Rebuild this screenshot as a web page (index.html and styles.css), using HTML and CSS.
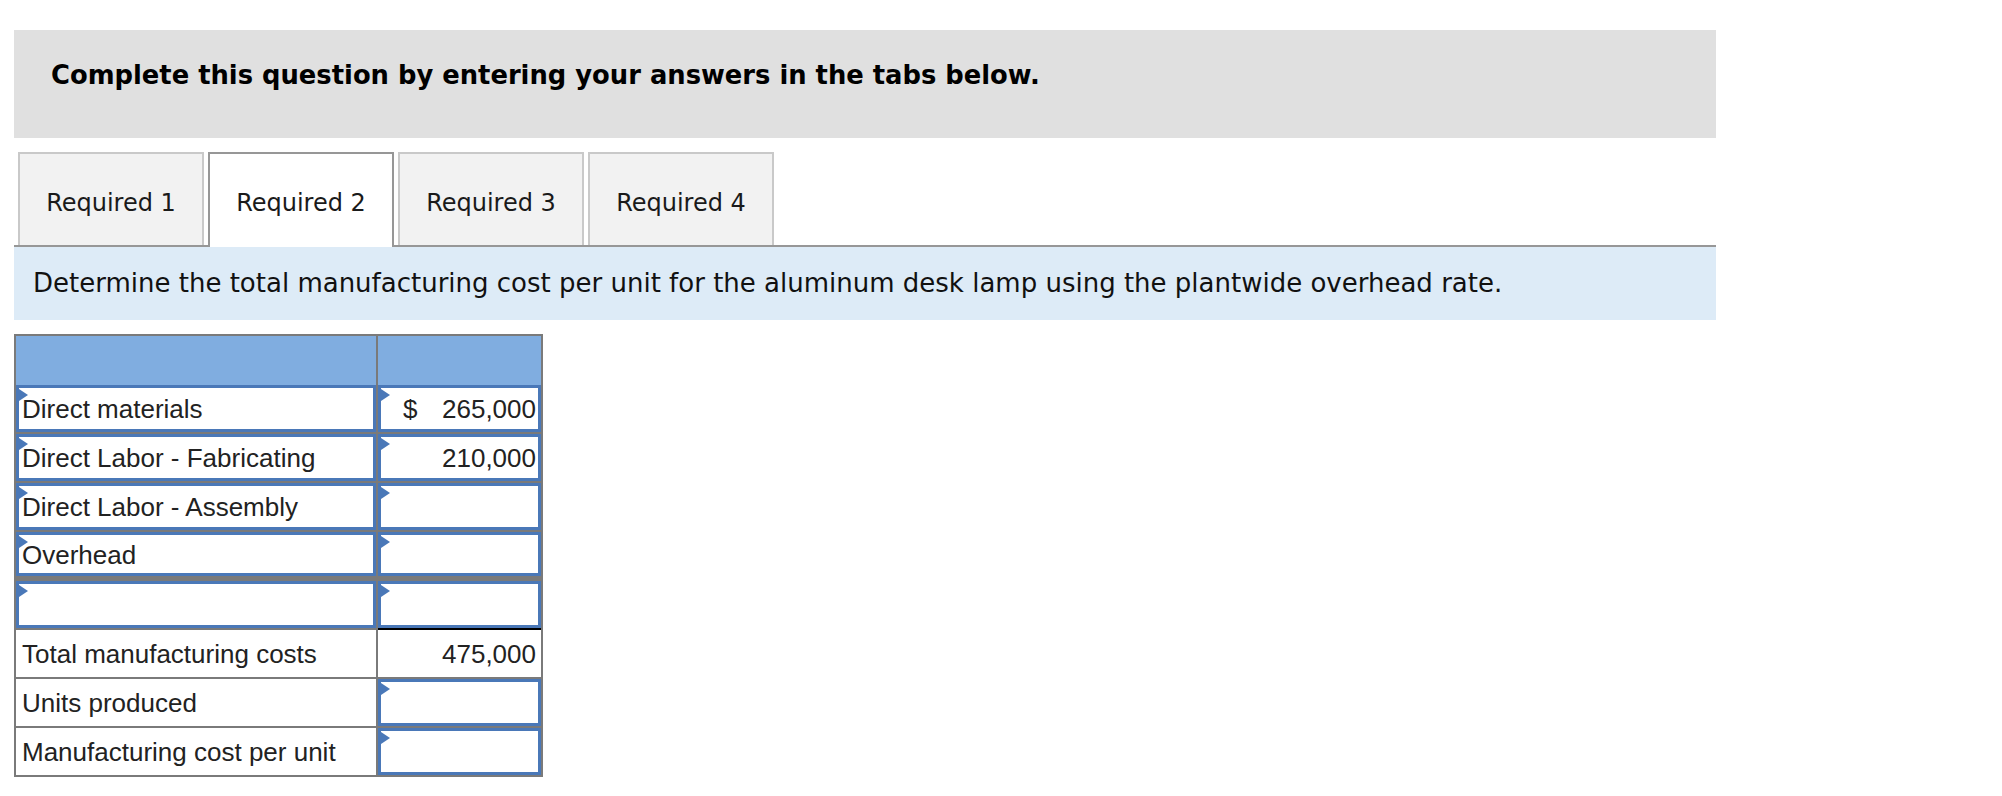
FILE: index.html
```html
<!DOCTYPE html>
<html lang="en">
<head>
<meta charset="utf-8">
<title>Required 2</title>
<link rel="stylesheet" href="styles.css">
</head>
<body>
<div class="page">
  <div class="prompt">Complete this question by entering your answers in the tabs below.</div>
  <div class="tabs">
    <div class="tab">Required 1</div>
    <div class="tab active">Required 2</div>
    <div class="tab">Required 3</div>
    <div class="tab">Required 4</div>
  </div>
  <div class="instr">Determine the total manufacturing cost per unit for the aluminum desk lamp using the plantwide overhead rate.</div>
  <div class="sheet">
    <div class="cell head"></div>
    <div class="cell head"></div>

    <div class="cell inp"><span class="mark"></span><span class="lbl">Direct materials</span></div>
    <div class="cell inp num"><span class="mark"></span><span class="cur">$</span><span class="amt">265,000</span></div>

    <div class="cell inp"><span class="mark"></span><span class="lbl">Direct Labor - Fabricating</span></div>
    <div class="cell inp num"><span class="mark"></span><span class="amt">210,000</span></div>

    <div class="cell inp"><span class="mark"></span><span class="lbl">Direct Labor - Assembly</span></div>
    <div class="cell inp num"><span class="mark"></span></div>

    <div class="cell inp short"><span class="mark"></span><span class="lbl">Overhead</span></div>
    <div class="cell inp num short"><span class="mark"></span></div>

    <div class="cell inp"><span class="mark"></span></div>
    <div class="cell inp num"><span class="mark"></span></div>

    <div class="cell plain"><span class="lbl">Total manufacturing costs</span></div>
    <div class="cell plain num total"><span class="amt">475,000</span></div>

    <div class="cell plain"><span class="lbl">Units produced</span></div>
    <div class="cell inp num"><span class="mark"></span></div>

    <div class="cell plain"><span class="lbl">Manufacturing cost per unit</span></div>
    <div class="cell inp num"><span class="mark"></span></div>
  </div>
</div>
</body>
</html>
```
FILE: styles.css
```css
html, body {
  margin: 0;
  padding: 0;
  background: #ffffff;
}

.page {
  margin-left: 14px;
  padding-top: 30px;
  width: 1702px;
}

.prompt {
  box-sizing: border-box;
  height: 108px;
  padding: 30px 0 0 37px;
  background: #e0e0e0;
  font-family: "DejaVu Sans", Verdana, sans-serif;
  font-weight: 700;
  font-size: 25.8px;
  line-height: 30px;
  color: #000;
}

.tabs {
  margin-top: 14px;
  display: flex;
  gap: 4px;
  padding-left: 4px;
  height: 93px;
  border-bottom: 2px solid #979797;
}

.tab {
  box-sizing: border-box;
  width: 186px;
  height: 93px;
  display: flex;
  align-items: center;
  justify-content: center;
  padding-top: 6px;
  background: #f2f2f2;
  border: 2px solid #c9c9c9;
  border-bottom: none;
  font-family: "DejaVu Sans", Verdana, sans-serif;
  font-size: 24px;
  color: #1a1a1a;
}

.tab.active {
  height: 95px;
  padding-top: 4px;
  background: #ffffff;
  border-color: #979797;
  position: relative;
}

.instr {
  box-sizing: border-box;
  height: 73px;
  padding: 21px 0 0 19px;
  background: #ddebf7;
  font-family: "DejaVu Sans", Verdana, sans-serif;
  font-size: 26px;
  line-height: 30px;
  color: #111;
}

.sheet {
  margin-top: 14px;
  display: grid;
  grid-template-columns: 360px 163px;
  grid-auto-rows: 47px;
  gap: 2px;
  padding: 2px;
  width: max-content;
  background: #7a7a7a;
  font-family: "Liberation Sans", Arial, sans-serif;
  font-size: 26px;
  color: #222;
}

.cell {
  position: relative;
  display: flex;
  align-items: center;
  background: #ffffff;
  box-sizing: border-box;
  padding-top: 2px;
}

.cell.head {
  height: 49px;
  background: #80ade0;
}

.cell.short {
  height: 44px;
}

.cell.inp {
  border: 3px solid #4a78b8;
  padding-left: 3px;
  padding-right: 2px;
}

.cell.plain {
  padding-left: 6px;
  padding-right: 5px;
}

.cell.num {
  justify-content: flex-end;
}

.cell.total {
  box-shadow: 0 -2px 0 #000;
}

.cur {
  margin-right: auto;
  padding-left: 19px;
}

.mark {
  position: absolute;
  left: -3px;
  top: -1px;
  width: 0;
  height: 0;
  border-top: 8px solid transparent;
  border-bottom: 8px solid transparent;
  border-left: 12px solid #4a78b8;
}
```
